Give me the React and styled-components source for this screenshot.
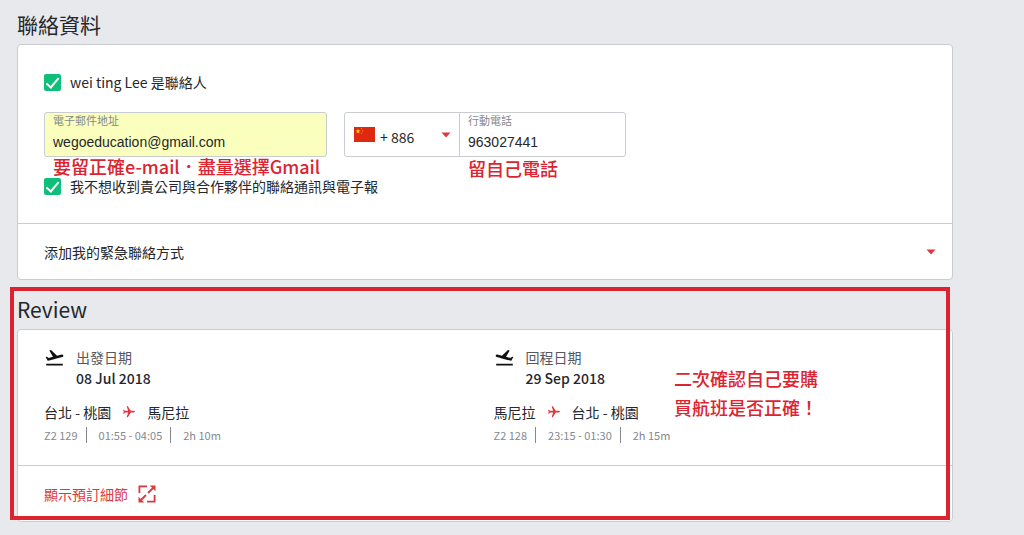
import styled, { createGlobalStyle } from "styled-components";
import { MdFlight, MdFlightTakeoff } from "react-icons/md";

const trips = [
  {
    label: "出發日期",
    date: "08 Jul 2018",
    from: "台北 - 桃園",
    to: "馬尼拉",
    details: ["Z2 129", "01:55 - 04:05", "2h 10m"],
    isReturn: false,
  },
  {
    label: "回程日期",
    date: "29 Sep 2018",
    from: "馬尼拉",
    to: "台北 - 桃園",
    details: ["Z2 128", "23:15 - 01:30", "2h 15m"],
    isReturn: true,
  },
];

const App = () => {
  return (
    <>
      <GlobalStyle />
      <Page>
        <section>
          <Title>聯絡資料</Title>
          <Card>
            <ContactForm>
              <CheckLabel>
                <Checkbox type="checkbox" defaultChecked />
                wei ting Lee 是聯絡人
              </CheckLabel>

              <Fields>
                <EmailField>
                  <FieldLabel htmlFor="email">電子郵件地址</FieldLabel>
                  <Input id="email" type="email" defaultValue="wegoeducation@gmail.com" />
                  <FieldNote>要留正確e-mail．盡量選擇Gmail</FieldNote>
                </EmailField>

                <PhoneGroup>
                  <CountryCode>
                    <Flag />
                    <CodeSelect aria-label="國碼" defaultValue="886">
                      <option value="886">+ 886</option>
                    </CodeSelect>
                    <Caret />
                  </CountryCode>
                  <PhoneField>
                    <FieldLabel htmlFor="phone">行動電話</FieldLabel>
                    <Input id="phone" type="tel" defaultValue="963027441" />
                    <FieldNote>留自己電話</FieldNote>
                  </PhoneField>
                </PhoneGroup>
              </Fields>

              <CheckLabel>
                <Checkbox type="checkbox" defaultChecked />
                我不想收到貴公司與合作夥伴的聯絡通訊與電子報
              </CheckLabel>
            </ContactForm>

            <EmergencyButton type="button">
              添加我的緊急聯絡方式
              <Caret />
            </EmergencyButton>
          </Card>
        </section>

        <Review>
          <Title>Review</Title>
          <Card>
            <Trips>
              {trips.map(({ label, date, from, to, details, isReturn }) => (
                <article key={label}>
                  <TripHeader>
                    <TripIcon $flipped={isReturn} />
                    <div>
                      <TripLabel>{label}</TripLabel>
                      <TripDate>{date}</TripDate>
                    </div>
                  </TripHeader>
                  <Route>
                    {from}
                    <Plane />
                    {to}
                  </Route>
                  <Details>
                    {details.map((detail) => (
                      <li key={detail}>{detail}</li>
                    ))}
                  </Details>
                </article>
              ))}
              <ReviewNote>
                二次確認自己要購
                <br />
                買航班是否正確！
              </ReviewNote>
            </Trips>
            <CardFooter>
              <DetailsButton type="button">
                顯示預訂細節
                <ExpandIcon />
              </DetailsButton>
            </CardFooter>
          </Card>
          <Frame />
        </Review>
      </Page>
    </>
  );
};

export default App;

const Caret = () => (
  <svg width="10" height="6" viewBox="0 0 10 6" aria-hidden="true">
    <path d="M0.5 0.5h9L5 5.5z" fill="#dd3840" />
  </svg>
);

const Flag = () => (
  <svg width="21" height="15" viewBox="0 0 21 15" aria-hidden="true">
    <path d="M0 0h21v15H0z" fill="#de2910" />
    <path
      d="M4 1.8l.6 1.7h1.8L5 4.6l.5 1.8L4 5.3 2.5 6.4 3 4.6 1.6 3.5h1.8z"
      fill="#ffde00"
    />
    <g fill="#f0a010">
      <circle cx="7.4" cy="1.6" r=".5" />
      <circle cx="8.6" cy="3" r=".5" />
      <circle cx="8.6" cy="4.8" r=".5" />
      <circle cx="7.4" cy="6.2" r=".5" />
    </g>
  </svg>
);

const ExpandIcon = () => (
  <svg width="18" height="18" viewBox="0 0 18 18" fill="none" aria-hidden="true">
    <g stroke="#dd3840" strokeWidth="1.8">
      <path d="M1.4 8V1.4h7.6M16.6 10v6.6H9" />
      <path d="M10 8l5-5M8 10l-5 5" />
    </g>
    <path d="M11.8 0.5h5.7v5.7zM0.5 11.8v5.7h5.7z" fill="#dd3840" />
  </svg>
);

const GlobalStyle = createGlobalStyle`
  * {
    box-sizing: border-box;
  }

  body {
    margin: 0;
    background: #e8e9ed;
    color: #24272c;
    font-family: "Noto Sans CJK TC", sans-serif;
    font-size: 14px;
    line-height: 20px;
  }

  button,
  input,
  select {
    font: inherit;
    color: inherit;
  }
`;

const Page = styled.main`
  padding: 8px 71px 12px 17px;
`;

const Title = styled.h2`
  margin: 0;
  padding-bottom: 4px;
  font-size: 21px;
  font-weight: 400;
  line-height: 32px;
`;

const Card = styled.div`
  background: #fff;
  border: 1px solid #c9ccd1;
  border-radius: 4px;
`;

const ContactForm = styled.form`
  padding: 27px 26px;
`;

const CheckLabel = styled.label`
  display: flex;
  align-items: center;
  gap: 9px;
`;

const Checkbox = styled.input`
  appearance: none;
  width: 17px;
  height: 17px;
  margin: 0;
  border-radius: 2px;
  background: #0fbf79;
  display: grid;
  place-items: center;

  &:checked::before {
    content: "";
    width: 11px;
    height: 5px;
    border: solid #fff;
    border-width: 0 0 2px 2px;
    transform: translateY(-1px) rotate(-50deg);
  }
`;

const Fields = styled.div`
  display: flex;
  gap: 17px;
  margin: 20px 0 19px;
`;

const Field = styled.div`
  position: relative;
  display: flex;
  flex-direction: column;
  height: 45px;
  padding: 0 8px;
`;

const EmailField = styled(Field)`
  width: 283px;
  background: #faffbd;
  border: 1px solid #c9ccd1;
  border-radius: 3px;
`;

const PhoneGroup = styled.div`
  display: flex;
  width: 282px;
  height: 45px;
  border: 1px solid #c9ccd1;
  border-radius: 3px;
`;

const PhoneField = styled(Field)`
  flex: 1;
  min-width: 0;
`;

const FieldLabel = styled.label`
  color: #85898f;
  font-size: 11px;
  line-height: 14px;
`;

const Input = styled.input`
  width: 100%;
  height: 30px;
  padding: 0;
  border: none;
  outline: none;
  background: transparent;
  font-family: "Liberation Sans", sans-serif;
  font-size: 14px;
`;

const CountryCode = styled.div`
  display: flex;
  align-items: center;
  width: 115px;
  padding: 0 8px 0 9px;
  border-right: 1px solid #c9ccd1;
`;

const CodeSelect = styled.select`
  appearance: none;
  flex: 1;
  min-width: 0;
  height: 100%;
  padding: 4px 0 0 5px;
  border: none;
  outline: none;
  background: transparent;
`;

const Note = styled.p`
  position: absolute;
  margin: 0;
  color: #dc2430;
  font-size: 18px;
  font-weight: 500;
  white-space: nowrap;
`;

const FieldNote = styled(Note)`
  top: 100%;
  left: 8px;
  line-height: 20px;
`;

const EmergencyButton = styled.button`
  display: flex;
  align-items: center;
  justify-content: space-between;
  width: 100%;
  padding: 18px 16px 17px 26px;
  border: none;
  border-top: 1px solid #c9ccd1;
  background: transparent;
  cursor: pointer;
`;

const Review = styled.section`
  position: relative;
  margin-top: 13px;
`;

const Trips = styled.div`
  position: relative;
  display: grid;
  grid-template-columns: 1fr 1fr;
  padding: 17px 9px 22px 26px;
`;

const TripHeader = styled.header`
  display: flex;
  gap: 11px;
  line-height: 21px;
`;

const TripIcon = styled(MdFlightTakeoff)`
  width: 21px;
  height: 21px;
  color: #111;
  transform: ${({ $flipped }) => ($flipped ? "scaleX(-1)" : "none")};
`;

const TripLabel = styled.div`
  color: #55595e;
`;

const TripDate = styled.div`
  font-weight: 500;
`;

const Route = styled.div`
  display: flex;
  align-items: center;
  gap: 11px;
  margin-top: 13px;
`;

const Plane = styled(MdFlight)`
  width: 14px;
  height: 14px;
  color: #dd3840;
  transform: rotate(90deg);
`;

const Details = styled.ul`
  display: flex;
  margin: 5px 0 0;
  padding: 0;
  list-style: none;
  color: #85898f;
  font-size: 11px;
  line-height: 16px;

  li + li {
    margin-left: 8px;
    padding-left: 12px;
    border-left: 1px solid #85898f;
  }
`;

const ReviewNote = styled(Note)`
  top: 34px;
  left: calc(50% + 189px);
  line-height: 29px;
`;

const CardFooter = styled.footer`
  padding: 18px 26px 17px;
  border-top: 1px solid #c9ccd1;
`;

const DetailsButton = styled.button`
  display: flex;
  align-items: center;
  gap: 10px;
  padding: 0;
  border: none;
  background: transparent;
  color: #dd3840;
  cursor: pointer;
`;

const Frame = styled.div`
  position: absolute;
  inset: -6px 3px 2px -7px;
  border: 4px solid #dc2430;
  pointer-events: none;
`;
